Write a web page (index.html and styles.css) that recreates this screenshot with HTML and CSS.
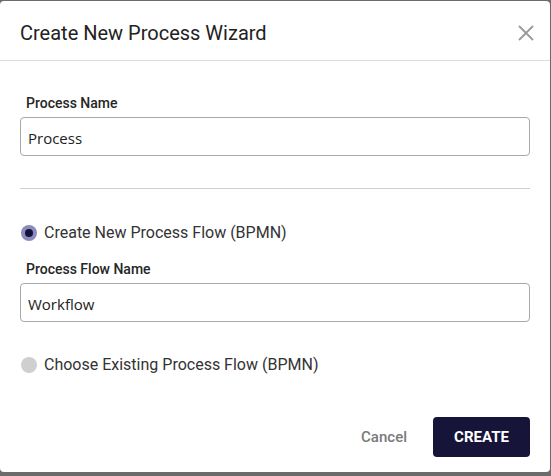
FILE: index.html
```html
<!DOCTYPE html>
<html>
<head>
<meta charset="utf-8">
<link rel="stylesheet" href="styles.css">
</head>
<body>
<div class="dialog">
  <div class="header">
    <h1 class="title">Create New Process Wizard</h1>
    <svg class="close" width="16" height="16" viewBox="0 0 16 16"><path d="M1 1L15 15M15 1L1 15" stroke="#9a9a9a" stroke-width="1.8" fill="none"/></svg>
  </div>
  <div class="body">
    <div class="field">
      <label class="label">Process Name</label>
      <div class="input">Process</div>
    </div>
    <hr class="sep">
    <div class="radio-row">
      <span class="radio checked"><span class="dot"></span></span>
      <span class="radio-label">Create New Process Flow (BPMN)</span>
    </div>
    <div class="field field2">
      <label class="label">Process Flow Name</label>
      <div class="input">Workflow</div>
    </div>
    <div class="radio-row radio-row2">
      <span class="radio"></span>
      <span class="radio-label">Choose Existing Process Flow (BPMN)</span>
    </div>
  </div>
  <div class="footer">
    <button class="btn-cancel">Cancel</button>
    <button class="btn-create">CREATE</button>
  </div>
</div>
</body>
</html>
```
FILE: styles.css
```css
html, body {
  margin: 0;
  padding: 0;
  background: #6b6b6b;
  height: 100%;
  overflow: hidden;
}
body {
  padding-top: 1px;
  font-family: Roboto, "Liberation Sans", sans-serif;
}
.dialog {
  width: 550px;
  height: 471px;
  background: #fff;
  border-radius: 4px;
  box-sizing: border-box;
  display: flex;
  flex-direction: column;
}
.header {
  height: 59px;
  border-bottom: 1px solid #dcdcdc;
  display: flex;
  align-items: center;
  justify-content: space-between;
  padding: 0 16px 0 20px;
  box-sizing: content-box;
}
.title {
  margin: 0;
  font-size: 20px;
  font-weight: 400;
  color: #222;
  padding-top: 5px;
}
.close {
  margin-top: 4px;
}
.body {
  padding: 34px 20px 0 20px;
}
.field {
  display: flex;
  flex-direction: column;
}
.label {
  font-size: 14px;
  font-weight: 500;
  color: #262626;
  padding-left: 6px;
  line-height: 17px;
  margin-bottom: 5px;
}
.input {
  height: 39px;
  box-sizing: border-box;
  border: 1px solid #a8a8a8;
  border-radius: 4px;
  padding: 2px 7px 0;
  display: flex;
  align-items: center;
  font-family: "Open Sans", "Noto Sans", sans-serif;
  font-size: 15px;
  color: #222;
}
.sep {
  border: 0;
  border-top: 1px solid #cfcfcf;
  margin: 32px 0 0 0;
}
.radio-row {
  display: flex;
  align-items: center;
  gap: 7px;
  margin-top: 35px;
  padding-left: 1px;
}
.radio-row2 {
  margin-top: 34px;
}
.radio {
  width: 16px;
  height: 16px;
  border-radius: 50%;
  background: #cfcfcf;
  display: flex;
  align-items: center;
  justify-content: center;
  flex-shrink: 0;
}
.radio.checked {
  background: #8d8bbd;
}
.dot {
  width: 8px;
  height: 8px;
  border-radius: 50%;
  background: #15133a;
}
.radio-label {
  font-size: 16px;
  color: #333;
  line-height: 18px;
}
.field2 {
  margin-top: 19px;
}
.footer {
  margin-top: auto;
  display: flex;
  justify-content: flex-end;
  align-items: center;
  gap: 26px;
  padding: 0 20px 15px 0;
}
.btn-cancel {
  border: 0;
  background: none;
  font-family: Roboto, "Liberation Sans", sans-serif;
  font-size: 15px;
  font-weight: 500;
  color: #7a7a7a;
  padding: 0;
}
.btn-create {
  width: 97px;
  height: 40px;
  border: 0;
  border-radius: 4px;
  background: #17143a;
  color: #fff;
  font-family: Roboto, "Liberation Sans", sans-serif;
  font-size: 15px;
  font-weight: 700;
}
```
